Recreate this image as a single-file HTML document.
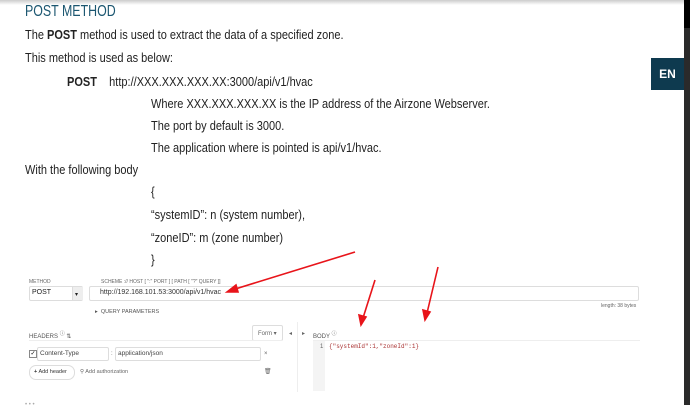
<!DOCTYPE html>
<html><head><meta charset="utf-8"><style>
body{margin:0;width:690px;height:405px;overflow:hidden;background:#fff;position:relative;font-family:"Liberation Sans",sans-serif;}
.t{position:absolute;font-size:12.5px;color:#222;white-space:nowrap;line-height:14px;transform:scaleX(0.88);transform-origin:0 0}
.s{position:absolute;font-size:6px;color:#666;white-space:nowrap;line-height:8px}
.box{position:absolute;border:1px solid #ddd;border-radius:2px;background:#fff}
</style></head><body>
<div style="position:absolute;left:0;top:0;width:684px;height:5px;background:linear-gradient(#ccc,#fff)"></div>
<div style="position:absolute;left:684px;top:0;width:6px;height:405px;background:#2a2a2a"></div>
<div style="position:absolute;left:684px;top:0;width:6px;height:28px;background:#000"></div>
<div style="position:absolute;left:651px;top:58px;width:33px;height:32px;background:#0e3a4f;color:#fff;font-weight:bold;font-size:12px;line-height:32px;text-align:center">EN</div>
<div class="t" style="left:25px;top:3px;font-size:15.5px;color:#1b5670;line-height:18px;transform:scaleX(0.8)">POST METHOD</div>
<div class="t" style="left:25px;top:28px">The <b>POST</b> method is used to extract the data of a specified zone.</div>
<div class="t" style="left:25px;top:51px">This method is used as below:</div>
<div class="t" style="left:67px;top:75px"><b>POST</b>&nbsp;&nbsp;&nbsp;&nbsp;http://XXX.XXX.XXX.XX:3000/api/v1/hvac</div>
<div class="t" style="left:151px;top:97px">Where XXX.XXX.XXX.XX is the IP address of the Airzone Webserver.</div>
<div class="t" style="left:151px;top:119px">The port by default is 3000.</div>
<div class="t" style="left:151px;top:141px">The application where is pointed is api/v1/hvac.</div>
<div class="t" style="left:25px;top:163px">With the following body</div>
<div class="t" style="left:151px;top:185px">{</div>
<div class="t" style="left:151px;top:208px">“systemID”: n (system number),</div>
<div class="t" style="left:151px;top:231px">“zoneID”: m (zone number)</div>
<div class="t" style="left:151px;top:253px">}</div>

<div class="s" style="left:29px;top:278px;font-size:5px">METHOD</div>
<div class="s" style="left:101px;top:278px;font-size:5px">SCHEME :// HOST [ ":" PORT ] [ PATH [ "?" QUERY ]]</div>
<div class="box" style="left:29px;top:286px;width:52px;height:13px"></div>
<div class="t" style="left:32px;top:288px;font-size:7px;line-height:9px;transform:none">POST</div>
<div style="position:absolute;left:72px;top:287px;width:10px;height:13px;background:#eee;border-left:1px solid #ddd"></div>
<div class="t" style="left:75px;top:288px;font-size:6px;transform:none">▾</div>
<div class="box" style="left:89px;top:286px;width:548px;height:13px;border-width:1.5px"></div>
<div class="t" style="left:100px;top:288px;font-size:7px;line-height:9px;color:#333;transform:none">http://192.168.101.53:3000/api/v1/hvac</div>
<div class="s" style="left:601px;top:302px;font-size:5px">length: 38 bytes</div>
<div class="s" style="left:95px;top:308px;font-size:5.5px;color:#555">▸&nbsp; QUERY PARAMETERS</div>
<div class="s" style="left:29px;top:330px;color:#555">HEADERS <sup>ⓘ</sup> ⇅</div>
<div class="box" style="left:252px;top:325px;width:29px;height:14px"></div>
<div class="s" style="left:258px;top:330px">Form ▾</div>
<div class="s" style="left:289px;top:330px">◂</div>
<div class="s" style="left:302px;top:330px">▸</div>
<div class="s" style="left:313px;top:330px;color:#555">BODY <sup>ⓘ</sup></div>
<div style="position:absolute;left:29px;top:340px;width:253px;height:1px;background:#eee"></div>
<div style="position:absolute;left:313px;top:340px;width:327px;height:1px;background:#eee"></div>
<div style="position:absolute;left:297px;top:322px;width:1px;height:70px;background:#eee"></div>
<div style="position:absolute;left:313px;top:341px;width:12px;height:50px;background:#f4f4f4"></div>
<div class="s" style="left:320px;top:343px">1</div>
<div class="s" style="left:329px;top:343px;color:#a33;font-family:'Liberation Mono',monospace">{"systemId":1,"zoneId":1}</div>
<div style="position:absolute;left:29px;top:350px;width:6px;height:6px;border:1px solid #888;font-size:6px;line-height:6px;text-align:center">✓</div>
<div class="box" style="left:37px;top:347px;width:70px;height:12px"></div>
<div class="s" style="left:40px;top:350px;color:#444;font-size:6.5px">Content-Type</div>
<div class="s" style="left:111px;top:350px">:</div>
<div class="box" style="left:115px;top:347px;width:144px;height:12px"></div>
<div class="s" style="left:118px;top:350px;color:#444;font-size:6.5px">application/json</div>
<div class="s" style="left:264px;top:350px">×</div>
<div class="box" style="left:29px;top:365px;width:44px;height:13px;border-radius:7px"></div>
<div class="s" style="left:34px;top:368px;color:#333;font-size:5.5px"><b>+</b> Add header</div>
<div class="s" style="left:80px;top:368px;font-size:5.5px">⚲ Add authorization</div>
<div class="s" style="left:264px;top:368px">🗑</div>
<div class="s" style="left:25px;top:401px;color:#aaa">• • •</div>

<svg style="position:absolute;left:0;top:0" width="690" height="405">
<g stroke="#e8141a" stroke-width="1.6" fill="#e8141a">
<line x1="355" y1="252" x2="232" y2="290"/><polygon points="227,292 236,285 238,292"/>
<line x1="375" y1="280" x2="363" y2="318"/><polygon points="361,325 359,315 366,317"/>
<line x1="438" y1="267" x2="427" y2="313"/><polygon points="425,320 423,310 430,312"/>
</g></svg>
</body></html>
